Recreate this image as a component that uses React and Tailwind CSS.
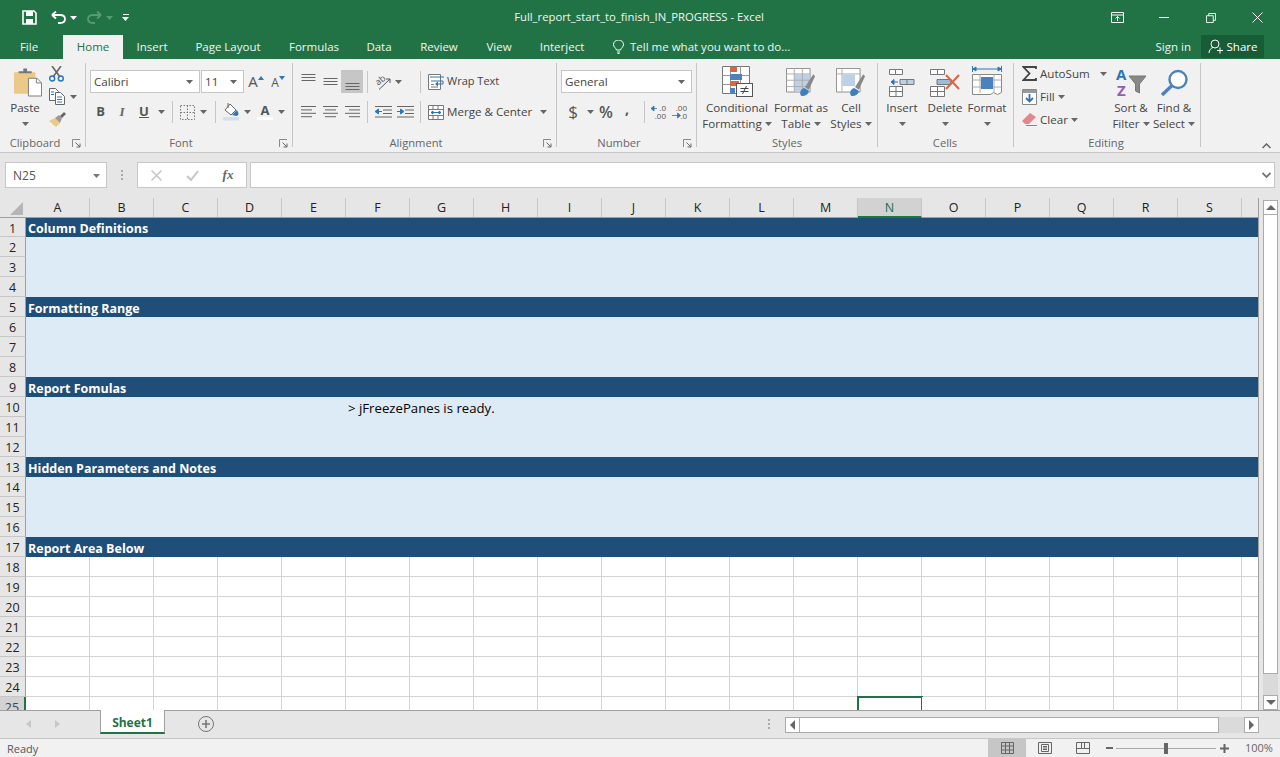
import React from 'react';

const Caret = ({ c = '#666', className = '' }) => (
  <svg width="7" height="4" viewBox="0 0 7 4" className={'shrink-0 ' + className}><path d="M0 0h7L3.5 4z" fill={c} /></svg>
);
const Launcher = () => (
  <svg width="9" height="9" viewBox="0 0 9 9" className="shrink-0"><path d="M0.5 8V0.5H8" fill="none" stroke="#8a8a8a" /><path d="M3.5 3.5L8 8M8 4.5V8H4.5" fill="none" stroke="#666" /></svg>
);
const Sep = ({ className = '' }) => <div className={'w-px h-[22px] bg-[#c6c6c6] shrink-0 ' + className} />;
const Slot = ({ w, children, className = '' }) => (
  <div style={{ width: w }} className={'h-full flex items-center justify-center shrink-0 ' + className}>{children}</div>
);

const Group = ({ w, label, center, launcher, children }) => (
  <div style={{ width: w }} className="h-[84px] shrink-0 border-r border-[#c6c6c6] flex flex-col">
    <div className="h-[72px] flex shrink-0">{children}</div>
    <div className="flex-1 relative flex items-center">
      <div style={{ width: center * 2 }} className="text-center text-[11.2px] leading-[8px] text-[#666] mt-[4px] shrink-0">{label}</div>
      {launcher ? <div className="absolute top-[4px] right-[4px]"><Launcher /></div> : null}
    </div>
  </div>
);

const Lines = ({ kind }) => {
  const L = { left: [[0, 15], [0, 11], [0, 15], [0, 11]], center: [[0, 15], [2, 11], [0, 15], [2, 11]], right: [[0, 15], [4, 11], [0, 15], [4, 11]] }[kind];
  return (
    <svg width="15" height="12" viewBox="0 0 15 12">
      {L.map(([x, w], i) => <rect key={i} x={x} y={i * 3.4} width={w} height="1" fill="#666" />)}
    </svg>
  );
};
const VAlign = ({ y }) => (
  <svg width="15" height="20" viewBox="0 0 15 20">
    {[0, 3, 6].map((d) => <rect key={d} x="0.5" y={y + d} width="14" height="1" fill="#666" />)}
  </svg>
);
const Indent = ({ flip }) => (
  <svg width="17" height="12" viewBox="0 0 17 12">
    <rect x="0" y="0" width="17" height="1" fill="#666" /><rect x="8" y="3.5" width="9" height="1" fill="#666" /><rect x="8" y="7" width="9" height="1" fill="#666" /><rect x="0" y="10.5" width="17" height="1" fill="#666" />
    {flip ? <path d="M0 5.5h4M7 5.5L3.5 3v5z" stroke="#2e75b6" fill="#2e75b6" /> : <path d="M3 5.5h4M0 5.5L3.5 3v5z" stroke="#2e75b6" fill="#2e75b6" />}
  </svg>
);

const PasteIcon = () => (
  <svg width="28" height="30" viewBox="0 0 30 31">
    <rect x="0" y="5" width="23" height="23" rx="1" fill="#edc987" />
    <path d="M5 6V4h5V1h4v3h5v2z" fill="#777" />
    <path d="M15.5 11.5h9l5 5v14h-14z" fill="#fff" stroke="#777" />
    <path d="M24 11.5v5h5.5" fill="none" stroke="#777" />
  </svg>
);
const CutIcon = () => (
  <svg width="15" height="16" viewBox="0 0 15 16">
    <path d="M3 0l8 11M12 0L4 11" stroke="#666" strokeWidth="1.6" fill="none" />
    <circle cx="3.2" cy="12.5" r="2.5" fill="none" stroke="#2e75b6" strokeWidth="1.4" /><circle cx="11.8" cy="12.5" r="2.5" fill="none" stroke="#2e75b6" strokeWidth="1.4" />
  </svg>
);
const CopyIcon = () => (
  <svg width="16" height="17" viewBox="0 0 16 17">
    <path d="M.5.5h6l3 3v9h-9z" fill="#fff" stroke="#666" />
    <path d="M6.500 4.500h5l4 4v8h-9z" fill="#fff" stroke="#666" />
    <path d="M8 9h5M8 11.500h5M8 14h5M2 4h3M2 6.500h3" stroke="#2e75b6" />
  </svg>
);
const PainterIcon = () => (
  <svg width="17" height="15" viewBox="0 0 17 15">
    <path d="M0 9l6-3 5 5-4 4z" fill="#edc987" />
    <path d="M6 6l4-3 3 3-2 5z" fill="#9a9a9a" />
    <path d="M11 4l4-4 2 2-4 4z" fill="#666" />
  </svg>
);
const BorderIcon = () => (
  <svg width="15" height="15" viewBox="0 0 15 15">
    <path d="M.5.5h14v14H.5zM7.500.5v14M.5 7.500h14" fill="none" stroke="#777" strokeDasharray="1.5 1.5" />
  </svg>
);
const FillIcon = () => (
  <svg width="17" height="18" viewBox="0 0 17 18">
    <rect x="0" y="14" width="16" height="3.5" fill="#cfe0ef" />
    <path d="M2 7l5-6 6 6-5 5z" fill="#fff" stroke="#666" />
    <path d="M5 0v5" stroke="#666" />
    <path d="M9 12l5-5 1.500 3.500c0 1.500-1 2.500-2 2.500z" fill="#2e75b6" />
  </svg>
);
const OrientIcon = () => (
  <svg width="18" height="16" viewBox="0 0 18 16" className="overflow-visible">
    <text x="7" y="9" textAnchor="middle" fontSize="9" fontFamily="Open Sans, sans-serif" fill="#555" transform="rotate(-38 7 7)">ab</text>
    <path d="M5 15.500L16 5M16 5h-4M16 5v4" stroke="#555" fill="none" />
  </svg>
);
const WrapIcon = () => (
  <svg width="16" height="16" viewBox="0 0 16 16">
    <path d="M.5.5h12v15H.5z" fill="#fff" stroke="#777" />
    <path d="M2 3h14" stroke="#2e75b6" />
    <path d="M3 7h12v3H10" stroke="#2e75b6" fill="none" /><path d="M7 10l3-2.500v5z" fill="#2e75b6" />
    <path d="M3 10.500h3M3 13h7" stroke="#777" />
  </svg>
);
const MergeIcon = () => (
  <svg width="16" height="15" viewBox="0 0 16 15">
    <path d="M.5.5h15v14H.5zM.5 4.500h15M.5 10.500h15M5 .5v4M10 .5v4M5 10.500v4M10 10.500v4" fill="#fff" stroke="#777" />
    <path d="M3 7.500h10M3 7.500l2-1.500v3zM13 7.500l-2-1.500v3z" stroke="#2e75b6" fill="#2e75b6" />
  </svg>
);
const DecIcon = ({ up }) => (
  <svg width="16" height="14" viewBox="0 0 16 14" className="overflow-visible">
    {up ? (
      <g fontFamily="Open Sans, sans-serif" fontSize="8" fill="#555" textAnchor="end">
        <text x="16" y="6">.0</text><text x="16" y="13.500">.00</text>
        <path d="M1 3.500h6M1 3.500l3-2.500v5z" stroke="#2e75b6" fill="#2e75b6" strokeWidth=".8" />
      </g>
    ) : (
      <g fontFamily="Open Sans, sans-serif" fontSize="8" fill="#555" textAnchor="end">
        <text x="16" y="6">.00</text><text x="16" y="13.500">.0</text>
        <path d="M1 10.500h6M9.500 10.500l-3-2.500v5z" stroke="#2e75b6" fill="#2e75b6" strokeWidth=".8" />
      </g>
    )}
  </svg>
);
const CondIcon = () => (
  <svg width="31" height="31" viewBox="0 0 31 31">
    <path d="M.5.5h27v27H.5z" fill="#fff" stroke="#777" />
    <path d="M8.500.5v27M18.500.5v27M.5 9.500h27M.5 18.500h27" stroke="#999" fill="none" />
    <rect x="8" y="1" width="7" height="5" fill="#d9663e" /><rect x="8" y="8" width="12" height="6" fill="#4a82bd" />
    <rect x="8" y="15" width="9" height="5" fill="#d9663e" /><rect x="8" y="22" width="5" height="5" fill="#4a82bd" />
    <rect x="14.500" y="17.500" width="16" height="13" fill="#fff" stroke="#555" />
    <path d="M18.500 22.500h8M18.500 25.500h8M24.500 20l-4 8" stroke="#444" fill="none" />
  </svg>
);
const Brush = () => (
  <g>
    <path d="M17 31c-3-3-1-8 3-9l5 3c0 4-4 6-8 6z" fill="#3f7fc0" />
    <path d="M21 21l9-14 2 2-7 15z" fill="#888" />
  </g>
);
const TableIcon = () => (
  <svg width="30" height="29" viewBox="0 0 33 32">
    <path d="M.5.5h26v26H.5z" fill="#fff" stroke="#888" />
    <rect x="9" y="7" width="17" height="19" fill="#bdd0e6" />
    <path d="M.5 6.500h26M.5 13.500h26M.5 20.500h26M9 .5v26M18 .5v26" stroke="#aaa" fill="none" />
    <Brush />
  </svg>
);
const CellStyleIcon = () => (
  <svg width="30" height="29" viewBox="0 0 33 32">
    <path d="M.5.5h26v26H.5z" fill="#fff" stroke="#888" />
    <path d="M.5 6.500h26M6.500.5v26" stroke="#aaa" fill="none" />
    <rect x="7" y="7" width="14" height="13" fill="#bdd0e6" />
    <Brush />
  </svg>
);
const InsertIcon = () => (
  <svg width="26" height="28" viewBox="0 0 26 28">
    <path d="M.5.5h6v5h-6zM6.500.5h7v5h-7zM.5 17.500h13v10H.5zM7 17.500v10M.5 22.500h13" fill="#fff" stroke="#777" />
    <path d="M11 10.500h14v5H11zM18 10.500v5" fill="#bdd0e6" stroke="#777" />
    <path d="M2 13h7M2 13l3-2.500v5z" fill="#2e75b6" stroke="#2e75b6" />
  </svg>
);
const DeleteIcon = () => (
  <svg width="31" height="28" viewBox="0 0 31 28">
    <path d="M.5.5h7v5h-7zM7.500.5h7v5h-7zM.5 17.500h14v10H.5zM7.500 17.500v10M.5 22.500h14" fill="#fff" stroke="#777" />
    <path d="M7 10.500h14v5H7z" fill="#9dbcdb" stroke="#777" />
    <path d="M16 6l13 14M29 6L16 20" stroke="#d9663e" strokeWidth="2" />
  </svg>
);
const FormatIcon = () => (
  <svg width="30" height="32" viewBox="0 0 30 32">
    <path d="M1 4h28M1 4l3-2v4zM29 4l-3-2v4zM.5 1v6M29.500 1v6" stroke="#2e75b6" fill="#2e75b6" />
    <path d="M.5 9.500h29v18l-4 2-4-2-3 2H.5z" fill="#fff" stroke="#888" />
    <path d="M8 9.500v18M22 9.500v18M.5 15h29M.5 22h29" stroke="#aaa" />
    <rect x="9" y="12" width="12" height="12" fill="#4a82bd" />
  </svg>
);
const SumIcon = () => (
  <svg width="15" height="15" viewBox="0 0 15 15"><path d="M14 3V1H1.500l6 6.500-6 6.500H14v-2" fill="none" stroke="#444" strokeWidth="1.800" /></svg>
);
const FillDown = () => (
  <svg width="15" height="16" viewBox="0 0 15 16">
    <path d="M.5.5h14v15H.5z" fill="#fff" stroke="#888" />
    <rect x="1" y="1" width="13" height="3" fill="#999" />
    <path d="M7.500 5v7M4 9l3.500 3.500L11 9" fill="none" stroke="#2e75b6" strokeWidth="1.800" />
  </svg>
);
const Eraser = () => (
  <svg width="15" height="13" viewBox="0 0 15 13">
    <path d="M0 8l8-8 6 4-7 7H3z" fill="#e7858f" />
    <path d="M4 12.500h11" stroke="#888" />
  </svg>
);
const SortIcon = () => (
  <svg width="32" height="30" viewBox="0 0 32 30">
    <text x="1" y="13" fontSize="15" fontWeight="700" fontFamily="Open Sans, sans-serif" fill="#2e75b6">A</text>
    <text x="2" y="29" fontSize="15" fontWeight="700" fontFamily="Open Sans, sans-serif" fill="#8e5fb0">Z</text>
    <path d="M14 9h17l-6.500 8v9l-4-2v-7z" fill="#888" stroke="#777" />
  </svg>
);
const FindIcon = () => (
  <svg width="29" height="28" viewBox="0 0 29 28">
    <circle cx="18" cy="10.500" r="8.500" fill="#fff" stroke="#4a82bd" strokeWidth="2.400" />
    <path d="M11.500 17L2 26" stroke="#4a82bd" strokeWidth="3.400" />
  </svg>
);

const BigBtn = ({ w, icon, a, b, caretB }) => (
  <div style={{ width: w }} className="shrink-0 flex flex-col items-center">
    <div className="mt-[4px] h-[30px] flex items-end justify-center">{icon}</div>
    <div className="mt-[3px] text-[11.600px] leading-[16px] whitespace-nowrap text-[#444] text-center">{a}</div>
    <div className="h-[16px] text-[11.600px] leading-[16px] whitespace-nowrap text-[#444] flex items-center gap-[3px]">{b}{caretB ? <Caret /> : null}</div>
  </div>
);

const Ribbon = () => (
  <div className="h-[94px] bg-[#f1f1f1] border-b border-[#c6c6c6] pt-[4px] flex shrink-0" style={{ fontFamily: '"Open Sans", sans-serif' }}>
    <Group w={86} label="Clipboard" center={35} launcher>
      <div className="ml-[9px] w-[32px] flex flex-col items-center shrink-0">
        <div className="mt-[4px] h-[30px] flex ml-[6px]"><PasteIcon /></div>
        <div className="mt-[3px] text-[11.600px] leading-[16px] text-[#444]">Paste</div>
        <div className="h-[16px] flex items-center"><Caret /></div>
      </div>
      <div className="ml-[8px] flex flex-col gap-[2px]">
        <div className="h-[21px] flex items-center"><CutIcon /></div>
        <div className="h-[21px] flex items-center gap-[5px]"><CopyIcon /><Caret /></div>
        <div className="h-[21px] flex items-center"><PainterIcon /></div>
      </div>
    </Group>

    <Group w={207} label="Font" center={95} launcher>
      <div className="ml-[4px] flex flex-col">
        <div className="mt-[7px] h-[23px] flex items-center">
          <div className="w-[110px] h-full bg-white border border-[#c6c6c6] flex items-center justify-between pl-[3px] pr-[6px] text-[11.600px] text-[#444]">Calibri<Caret /></div>
          <div className="w-[43px] ml-[1px] h-full bg-white border border-[#c6c6c6] flex items-center justify-between pl-[3px] pr-[6px] text-[11.600px] text-[#444]">11<Caret /></div>
          <Slot w={22} className="ml-[1px]">
            <span className="text-[15px] text-[#555] leading-none">A</span><svg width="6" height="4" viewBox="0 0 6 4" className="-mt-[8px]"><path d="M3 0l3 4H0z" fill="#2e75b6" /></svg>
          </Slot>
          <Slot w={22}>
            <span className="text-[12px] text-[#555] leading-none mt-[2px]">A</span><svg width="6" height="4" viewBox="0 0 6 4" className="-mt-[8px]"><path d="M3 4l3-4H0z" fill="#2e75b6" /></svg>
          </Slot>
        </div>
        <div className="mt-[7px] h-[24px] flex items-center">
          <Slot w={21}><span className="text-[13px] font-bold text-[#555]">B</span></Slot>
          <Slot w={22}><span className="text-[13px] italic font-bold text-[#666]" style={{ fontFamily: '"Liberation Serif", serif' }}>I</span></Slot>
          <Slot w={22}><span className="text-[13px] font-bold underline text-[#555]">U</span></Slot>
          <Slot w={12}><Caret /></Slot>
          <Sep className="ml-[5px]" />
          <Slot w={20} className="ml-[4px]"><BorderIcon /></Slot>
          <Slot w={13}><Caret /></Slot>
          <Sep className="ml-[5px]" />
          <Slot w={20} className="ml-[5px]"><FillIcon /></Slot>
          <Slot w={12}><Caret /></Slot>
          <Slot w={20} className="ml-[2px] flex-col">
            <span className="text-[13px] font-bold text-[#555] leading-[12px]">A</span><div className="w-[16px] h-[3px] bg-white mt-[1px]" />
          </Slot>
          <Slot w={12}><Caret /></Slot>
        </div>
      </div>
    </Group>

    <Group w={264} label="Alignment" center={123} launcher>
      <div className="ml-[4px] flex flex-col">
        <div className="mt-[7px] h-[23px] flex items-center">
          <Slot w={22}><VAlign y={2} /></Slot>
          <Slot w={22}><VAlign y={6} /></Slot>
          <Slot w={22} className="bg-[#c6c6c6]"><VAlign y={11} /></Slot>
          <Sep className="ml-[4px]" />
          <Slot w={20} className="ml-[5px]"><OrientIcon /></Slot>
          <Slot w={10}><Caret /></Slot>
          <Sep className="ml-[17px]" />
          <Slot w={16} className="ml-[7px]"><WrapIcon /></Slot>
          <span className="ml-[3px] text-[11px] text-[#444] whitespace-nowrap">Wrap Text</span>
        </div>
        <div className="mt-[7px] h-[24px] flex items-center">
          <Slot w={22}><Lines kind="left" /></Slot>
          <Slot w={22}><Lines kind="center" /></Slot>
          <Slot w={22}><Lines kind="right" /></Slot>
          <Sep className="ml-[4px]" />
          <Slot w={20} className="ml-[5px]"><Indent flip={false} /></Slot>
          <Slot w={20} className="ml-[2px]"><Indent flip /></Slot>
          <Sep className="ml-[5px]" />
          <Slot w={16} className="ml-[7px]"><MergeIcon /></Slot>
          <span className="ml-[3px] text-[11.600px] text-[#444] whitespace-nowrap">Merge &amp; Center</span>
          <Caret className="ml-[8px]" />
        </div>
      </div>
    </Group>

    <Group w={140} label="Number" center={62} launcher>
      <div className="ml-[4px] flex flex-col">
        <div className="mt-[7px] h-[23px] w-[131px] bg-white border border-[#c6c6c6] flex items-center justify-between pl-[3px] pr-[6px] text-[11.600px] text-[#444]">General<Caret /></div>
        <div className="mt-[7px] h-[24px] flex items-center">
          <Slot w={24}><span className="text-[17px] text-[#555]">$</span></Slot>
          <Slot w={10}><Caret /></Slot>
          <Slot w={22}><span className="text-[16px] font-semibold text-[#555]">%</span></Slot>
          <Slot w={20}><span className="text-[14px] font-bold text-[#555] -mt-[8px]">,</span></Slot>
          <Sep className="ml-[7px]" />
          <Slot w={18} className="ml-[4px]"><DecIcon up /></Slot>
          <Slot w={18} className="ml-[3px]"><DecIcon /></Slot>
        </div>
      </div>
    </Group>

    <Group w={181} label="Styles" center={90}>
      <div className="ml-[4px] flex">
        <BigBtn w={72} icon={<CondIcon />} a="Conditional" b="Formatting" caretB />
        <BigBtn w={56} icon={<TableIcon />} a="Format as" b="Table" caretB />
        <BigBtn w={44} icon={<CellStyleIcon />} a="Cell" b="Styles" caretB />
      </div>
    </Group>

    <Group w={136} label="Cells" center={67}>
      <div className="ml-[2px] flex">
        <BigBtn w={44} icon={<InsertIcon />} a="Insert" b="" caretB />
        <BigBtn w={42} icon={<DeleteIcon />} a="Delete" b="" caretB />
        <BigBtn w={42} icon={<FormatIcon />} a="Format" b="" caretB />
      </div>
    </Group>

    <Group w={187} label="Editing" center={92}>
      <div className="ml-[8px] w-[88px] flex flex-col gap-[2px] text-[11.600px] text-[#444] shrink-0">
        <div className="h-[21px] flex items-center"><SumIcon /><span className="ml-[3px]">AutoSum</span><Caret className="ml-[10px]" /></div>
        <div className="h-[21px] flex items-center"><FillDown /><span className="ml-[3px]">Fill</span><Caret className="ml-[3px]" /></div>
        <div className="h-[21px] flex items-center"><Eraser /><span className="ml-[3px]">Clear</span><Caret className="ml-[3px]" /></div>
      </div>
      <BigBtn w={42} icon={<SortIcon />} a="Sort &" b="Filter" caretB />
      <BigBtn w={44} icon={<FindIcon />} a="Find &" b="Select" caretB />
    </Group>

    <div className="flex-1 flex justify-end items-end pb-[3px] pr-[9px]">
      <svg width="9" height="6" viewBox="0 0 9 6"><path d="M.5 5l4-4 4 4" fill="none" stroke="#666" strokeWidth="1.500" /></svg>
    </div>
  </div>
);

const TitleBar = () => (
  <div className="h-[35px] bg-[#217346] flex items-center shrink-0 text-white" style={{ fontFamily: '"Open Sans", sans-serif' }}>
    <div className="w-[22px] ml-[22px] flex shrink-0">
      <svg width="15" height="15" viewBox="0 0 15 15"><path d="M1 1h11l2 2v11H1z" fill="none" stroke="#fff" strokeWidth="1.600" /><rect x="4" y="1" width="7" height="5" fill="#fff" /><rect x="4" y="9" width="7" height="5" fill="#fff" /></svg>
    </div>
    <div className="ml-[7px] w-[16px] flex shrink-0">
      <svg width="15" height="13" viewBox="0 0 15 13"><path d="M1 4h8c3 0 5 1.500 5 4s-2 4-5 4H7" fill="none" stroke="#fff" strokeWidth="1.800" /><path d="M1 4l4-3.500M1 4l4 3.500" stroke="#fff" strokeWidth="1.800" /></svg>
    </div>
    <Caret c="#fff" className="ml-[3px]" />
    <div className="ml-[10px] w-[16px] flex shrink-0">
      <svg width="15" height="13" viewBox="0 0 15 13"><path d="M14 4H6C3 4 1 5.500 1 8s2 4 5 4h2" fill="none" stroke="#579a76" strokeWidth="1.800" /><path d="M14 4l-4-3.500M14 4l-4 3.500" stroke="#579a76" strokeWidth="1.800" /></svg>
    </div>
    <Caret c="#579a76" className="ml-[3px]" />
    <div className="ml-[9px] flex flex-col items-center gap-[2px] w-[7px] shrink-0">
      <div className="w-[6px] h-px bg-white" /><Caret c="#fff" />
    </div>
    <div className="w-[385px] shrink-0" />
    <div className="w-[250px] shrink-0 text-center text-[11.300px] whitespace-nowrap text-[#f0f6f2]">Full_report_start_to_finish_IN_PROGRESS - Excel</div>
    <div className="flex-1" />
    <svg width="13" height="11" viewBox="0 0 13 11" className="mr-[35px] shrink-0"><path d="M.5.5h12v10H.5zM.5 3h12M6.500 9V4.500M4.500 6.500l2-2 2 2" fill="none" stroke="#fff" /></svg>
    <div className="w-[10px] h-px bg-white mr-[37px] shrink-0" />
    <svg width="10" height="10" viewBox="0 0 11 11" className="mr-[36px] shrink-0"><path d="M.5 3h7.500v7.500H.5zM3 3V.5h7.500V8H8" fill="none" stroke="#fff" /></svg>
    <svg width="11" height="11" viewBox="0 0 11 11" className="mr-[17px] shrink-0"><path d="M.5.5l10 10M10.500.5l-10 10" stroke="#fff" /></svg>
  </div>
);

const Tab = ({ w, children, active }) => (
  <div style={{ width: w }} className={'h-full flex items-center justify-center shrink-0 whitespace-nowrap ' + (active ? 'bg-[#f1f1f1] text-[#217346]' : 'text-[#f0f6f2]')}>{children}</div>
);

const Tabs = () => (
  <div className="h-[24px] bg-[#217346] flex items-center shrink-0 text-[11.500px]" style={{ fontFamily: '"Open Sans", sans-serif' }}>
    <Tab w={58}>File</Tab>
    <div className="w-[5px] shrink-0" />
    <Tab w={60} active>Home</Tab>
    <Tab w={58}>Insert</Tab>
    <Tab w={94}>Page Layout</Tab>
    <Tab w={78}>Formulas</Tab>
    <Tab w={52}>Data</Tab>
    <Tab w={68}>Review</Tab>
    <Tab w={52}>View</Tab>
    <Tab w={74}>Interject</Tab>
    <svg width="11" height="14" viewBox="0 0 11 14" className="ml-[14px] shrink-0"><path d="M3.500 10C3 8 .5 7 .5 4.500a5 4.500 0 0 1 10 0C10.500 7 8 8 7.500 10zM4 12h3M4.500 13.500h2" fill="none" stroke="#fff" /></svg>
    <span className="ml-[6px] text-[#f0f6f2] whitespace-nowrap">Tell me what you want to do...</span>
    <div className="flex-1" />
    <span className="text-[#f0f6f2] whitespace-nowrap mr-[10px]">Sign in</span>
    <div className="w-[63px] h-[23px] bg-[#185c37] flex items-center justify-center gap-[4px] text-white mr-[16px] shrink-0 self-start">
      <svg width="15" height="15" viewBox="0 0 15 15"><circle cx="7" cy="5" r="4" fill="none" stroke="#fff" /><path d="M1 14c0-3 2-5 4-5.500M9 11.500h6M12 8.500v6" fill="none" stroke="#fff" /></svg>
      Share
    </div>
  </div>
);

const FormulaBar = () => (
  <div className="h-[45px] bg-[#e6e6e6] flex items-start pt-[9px] shrink-0 pl-[5px]" style={{ fontFamily: '"Open Sans", sans-serif' }}>
    <div className="w-[102px] h-[26px] bg-white border border-[#c6c6c6] flex items-center justify-between pl-[7px] pr-[6px] pt-[2px] text-[12px] text-[#555] shrink-0">N25<Caret c="#777" /></div>
    <div className="w-[30px] h-[26px] shrink-0 flex flex-col items-center justify-center gap-[2px]">
      <div className="w-[2px] h-[2px] bg-[#aaa]" /><div className="w-[2px] h-[2px] bg-[#aaa]" /><div className="w-[2px] h-[2px] bg-[#aaa]" />
    </div>
    <div className="w-[110px] h-[26px] bg-white border border-[#c6c6c6] flex items-center shrink-0">
      <Slot w={36}><svg width="11" height="11" viewBox="0 0 11 11"><path d="M.5.5l10 10M10.500.5l-10 10" stroke="#c6c6c6" strokeWidth="1.500" /></svg></Slot>
      <Slot w={37}><svg width="13" height="11" viewBox="0 0 13 11"><path d="M1 6l4 4 7-9" fill="none" stroke="#c6c6c6" strokeWidth="2" /></svg></Slot>
      <Slot w={34}><span className="text-[13px] italic font-bold text-[#666]" style={{ fontFamily: '"Liberation Serif", serif' }}>fx</span></Slot>
    </div>
    <div className="w-[1025px] ml-[3px] h-[26px] bg-white border border-[#c6c6c6] flex items-center justify-end pr-[3px] shrink-0">
      <svg width="9" height="6" viewBox="0 0 9 6"><path d="M.5 1l4 4 4-4" fill="none" stroke="#777" strokeWidth="1.800" /></svg>
    </div>
  </div>
);

const cols = 'ABCDEFGHIJKLMNOPQRS'.split('');

const ColHeader = () => (
  <div className="h-[20px] flex bg-[#e6e6e6] border-b border-[#9f9f9f] shrink-0 text-[12.500px] text-[#222]">
    <div className="w-[26px] flex items-end justify-end pr-[3px] pb-[2px] shrink-0">
      <svg width="13" height="13" viewBox="0 0 13 13"><path d="M13 0v13H0z" fill="#b5b5b5" /></svg>
    </div>
    {cols.map((c) => (
      <div key={c} className={'w-[64px] shrink-0 flex items-center justify-center border-r pt-[2px] ' + (c === 'N' ? 'bg-[#d2d2d2] border-[#c6c6c6] text-[#217346] h-[20px] border-b-2 border-b-[#217346]' : 'border-[#c6c6c6]')}>{c}</div>
    ))}
    <div className="flex-1" />
  </div>
);

const banners = { 1: 'Column Definitions', 5: 'Formatting Range', 9: 'Report Fomulas', 13: 'Hidden Parameters and Notes', 17: 'Report Area Below' };

const Row = ({ n }) => {
  const cur = n === 25;
  const h = n === 1 ? 'h-[19px]' : 'h-[20px]';
  const head = (
    <div className={'w-[26px] shrink-0 flex items-center justify-center border-b border-r text-[12.500px] pt-[4px] ' + h + ' ' + (cur ? 'bg-[#d2d2d2] border-[#c6c6c6] border-r-2 border-r-[#217346] text-[#444]' : 'bg-[#e6e6e6] border-b-[#c6c6c6] border-r-[#9f9f9f] text-[#222]')}>{n}</div>
  );
  if (banners[n]) {
    return (
      <div className={'flex ' + h}>
        {head}
        <div className="flex-1 bg-[#1f4e78] text-white text-[12.500px] font-bold pl-[2px] pt-[4px] flex items-center whitespace-nowrap">{banners[n]}</div>
      </div>
    );
  }
  if (n < 17) {
    return (
      <div className="h-[20px] flex">
        {head}
        <div className="flex-1 bg-[#ddebf7] text-[13.200px] text-black flex items-center pt-[4px]">
          {n === 10 ? <span className="ml-[322px] whitespace-nowrap">&gt; jFreezePanes is ready.</span> : null}
        </div>
      </div>
    );
  }
  return (
    <div className="h-[20px] flex">
      {head}
      {cols.map((c) => (
        <div key={c} className="w-[64px] h-[20px] shrink-0 border-r border-b border-[#d4d4d4] bg-white relative">
          {cur && c === 'N' ? <div className="absolute -left-px -top-[1px] w-[66px] h-[24px] border-2 border-[#217346]" /> : null}
        </div>
      ))}
      <div className="flex-1 bg-white border-b border-[#d4d4d4]" />
    </div>
  );
};

const ScrollBtn = ({ d, className = '' }) => {
  const p = { up: 'M5 1l5 5H0z', down: 'M5 6L0 1h10z', left: 'M1 5l5-5v10z', right: 'M6 5L1 0v10z' }[d];
  const v = d === 'up' || d === 'down';
  return (
    <div className={'bg-white border border-[#ababab] flex items-center justify-center shrink-0 w-[15px] h-[15px] ' + className}>
      <svg width={v ? 10 : 7} height={v ? 7 : 10} viewBox={v ? '0 0 10 7' : '0 0 7 10'}><path d={p} fill="#666" /></svg>
    </div>
  );
};

const Sheet = () => (
  <div className="h-[512px] flex bg-[#e6e6e6] shrink-0" style={{ fontFamily: '"Open Sans", sans-serif' }}>
    <div className="w-[1259px] shrink-0 flex flex-col border-r border-[#9f9f9f] overflow-hidden">
      <ColHeader />
      <div className="flex-1 overflow-hidden">
        {Array.from({ length: 25 }, (_, i) => <Row key={i} n={i + 1} />)}
      </div>
    </div>
    <div className="w-[21px] shrink-0 flex flex-col items-center pt-[2px] pl-[2px]">
      <ScrollBtn d="up" />
      <div className="w-[15px] h-[460px] bg-white border border-[#ababab] -mt-px shrink-0" />
      <div className="w-[15px] flex-1 bg-[#dadada]" />
      <ScrollBtn d="down" />
    </div>
  </div>
);

const TabBar = () => (
  <div className="h-[29px] bg-[#e6e6e6] border-t border-[#9f9f9f] border-b-[#c6c6c6] border-b flex shrink-0 items-start" style={{ fontFamily: '"Open Sans", sans-serif' }}>
    <div className="w-[100px] h-full flex items-center shrink-0 pl-[26px] gap-[24px] pb-[2px]">
      <svg width="5" height="8" viewBox="0 0 5 8"><path d="M0 4l5-4v8z" fill="#c6c6c6" /></svg>
      <svg width="5" height="8" viewBox="0 0 5 8"><path d="M5 4L0 0v8z" fill="#c6c6c6" /></svg>
    </div>
    <div className="w-[65px] h-[24px] -mt-px bg-white border-x border-[#9f9f9f] border-b-2 border-b-[#217346] flex items-center justify-center pt-[4px] text-[12px] font-bold text-[#217346] shrink-0">Sheet1</div>
    <div className="ml-[33px] mt-[5px] w-[16px] h-[16px] rounded-full border border-[#777] flex items-center justify-center shrink-0">
      <svg width="10" height="10" viewBox="0 0 10 10"><path d="M5 1v8M1 5h8" stroke="#777" strokeWidth="1.600" /></svg>
    </div>
    <div className="ml-[554px] mt-[8px] flex flex-col gap-[2px] shrink-0">
      <div className="w-[2px] h-[2px] bg-[#aaa]" /><div className="w-[2px] h-[2px] bg-[#aaa]" /><div className="w-[2px] h-[2px] bg-[#aaa]" />
    </div>
    <div className="ml-[15px] mt-[6px] w-[474px] h-[16px] flex shrink-0">
      <ScrollBtn d="left" className="h-[16px]" />
      <div className="w-[420px] h-[16px] bg-white border border-[#ababab] -ml-px shrink-0" />
      <div className="flex-1 bg-[#dadada] h-[16px]" />
      <ScrollBtn d="right" className="h-[16px]" />
    </div>
  </div>
);

const StatusBar = () => (
  <div className="h-[18px] bg-[#f1f1f1] flex items-center shrink-0 text-[11px] text-[#555]" style={{ fontFamily: '"Open Sans", sans-serif' }}>
    <span className="ml-[7px] w-[981px] shrink-0 pt-[2px]">Ready</span>
    <div className="w-[38px] h-full bg-[#c6c6c6] flex items-center justify-center shrink-0">
      <svg width="13" height="12" viewBox="0 0 13 12"><path d="M.5.5h12v11H.5zM4.500.5v11M8.500.5v11M.5 4h12M.5 8h12" fill="none" stroke="#666" /></svg>
    </div>
    <div className="w-[38px] flex justify-center shrink-0">
      <svg width="14" height="12" viewBox="0 0 14 12"><path d="M.5.5h13v11H.5zM3.500 2.500h7v7h-7zM5 4.500h4M5 6h4M5 7.500h4" fill="none" stroke="#666" /></svg>
    </div>
    <div className="w-[38px] flex justify-center shrink-0">
      <svg width="14" height="12" viewBox="0 0 14 12"><path d="M.5.5h13v11H.5zM5.500.5v6h3V.5M.5 6.500h5M8.500 6.500h5" fill="none" stroke="#666" /></svg>
    </div>
    <div className="w-[7px] h-[2px] bg-[#666] ml-[4px] shrink-0" />
    <div className="ml-[3px] w-[100px] h-[1px] bg-[#aaa] flex justify-center items-center shrink-0">
      <div className="w-[4px] h-[11px] bg-[#666] shrink-0" />
    </div>
    <svg width="9" height="9" viewBox="0 0 9 9" className="ml-[4px] shrink-0"><path d="M4.500 0v9M0 4.500h9" stroke="#666" strokeWidth="2" /></svg>
    <span className="ml-[16px] whitespace-nowrap text-[#666]">100%</span>
  </div>
);

export default function App() {
  return (
    <div className="w-[1280px] h-[757px] overflow-hidden flex flex-col bg-white">
      <TitleBar />
      <Tabs />
      <Ribbon />
      <FormulaBar />
      <Sheet />
      <TabBar />
      <StatusBar />
    </div>
  );
}
